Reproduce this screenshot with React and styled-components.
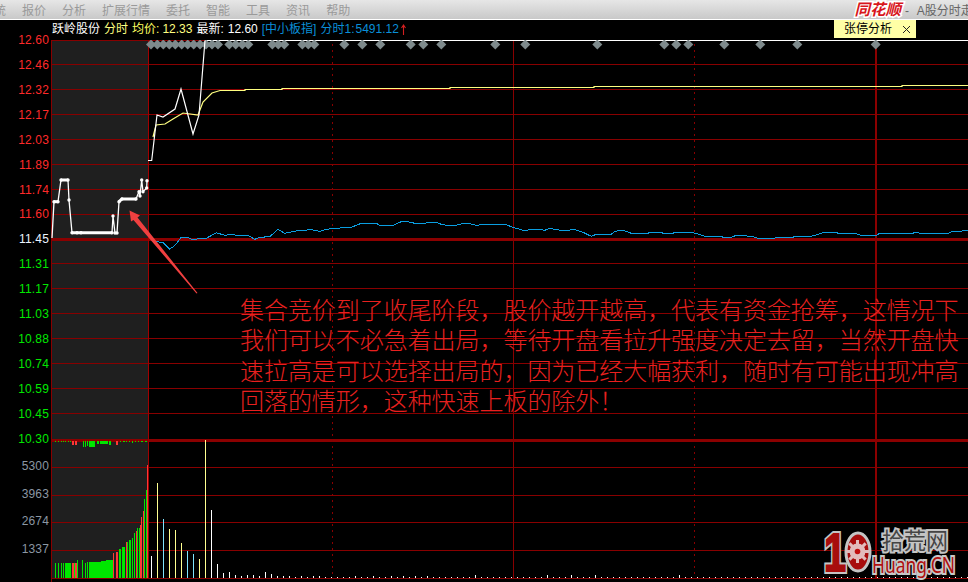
import React from 'react';
import styled, { createGlobalStyle } from 'styled-components';

const Global = createGlobalStyle`
  html, body { margin: 0; padding: 0; background: #000; }
`;

const Screen = styled.div`
  width: 968px; height: 582px; overflow: hidden; background: #000;
  display: flex; flex-direction: column;
  font-family: "Liberation Sans", "Noto Sans CJK SC", sans-serif; font-size: 12px;
`;
const MenuBar = styled.div`
  height: 19px; flex: none; border-bottom: 1px solid #fff;
  background: linear-gradient(#e6e6e6, #c9c9c9);
  display: flex; align-items: center; gap: 16px; color: #9a9a9a; white-space: nowrap;
`;
const MenuItem = styled.span`
  flex: none;
  &:first-child { margin-left: -6px; }
`;
const Brand = styled.span`
  margin-left: auto; flex: none; color: #d8161c; font-size: 15.5px; font-weight: 700; font-style: italic;
  line-height: 16px; -webkit-text-stroke: 3px #fff; paint-order: stroke fill;
`;
const WindowTitle = styled.span`
  flex: none; width: 63px; margin-left: -12px; overflow: hidden; color: #666; word-spacing: 5px;
`;
const Workspace = styled.div`
  flex: 1; min-height: 0; display: grid; grid-template-columns: 51px 1fr; grid-template-rows: 20px 1fr;
`;
const Axis = styled.div`
  grid-row: 1 / 3; padding-top: 7.8px; display: flex; flex-direction: column; min-width: 0;
`;
const AxisGroup = styled.div`
  display: flex; flex-direction: column; margin-top: ${p => p.$mt || 0}px;
`;
const AxisLabel = styled.div`
  height: ${p => p.$h}px; line-height: ${p => p.$h}px; text-align: right; padding-right: 2px;
  color: ${p => p.$c}; letter-spacing: .15px;
`;
const Header = styled.div`
  display: flex; align-items: flex-start; white-space: nowrap; padding-left: 1px; line-height: 18px;
`;
const HeaderItem = styled.span`
  color: ${p => p.$c}; margin-left: ${p => p.$ml || 0}px; flex: none;
`;
const UpArrow = styled.svg`
  width: 5px; height: 12px; flex: none; margin: 4px 0 0 2px;
`;
const Tab = styled.div`
  margin-left: auto; margin-right: 52px; width: 82px; height: 18px; box-sizing: border-box;
  background: #ffffa6; color: #000; display: flex; align-items: center; gap: 10px; padding-left: 10px;
`;
const Close = styled.svg`
  width: 9px; height: 9px; flex: none;
`;
const ChartPane = styled.div`
  position: relative; min-width: 0; min-height: 0;
`;
const Chart = styled.svg`
  display: block; width: 917px; height: 542px;
`;
const Note = styled.div`
  position: absolute; left: 189px; top: 254px; width: 722px;
  color: #e8201f; font-family: "Noto Sans CJK SC", sans-serif; font-weight: 300; font-size: 24px;
  line-height: 30.4px; letter-spacing: -.05px;
`;
const LogoCn = styled.text`
  font-family: "Noto Sans CJK SC", sans-serif; font-size: 23px; fill: #454545;
  stroke: #c4c4c4; stroke-width: 4px; paint-order: stroke fill;
`;
const LogoEn = styled.text`
  font-family: "Noto Sans", sans-serif; font-size: 22px; fill: #b01010;
  stroke: #c8c8c8; stroke-width: 4px; paint-order: stroke fill;
`;
const LogoOne = styled.text`
  font-family: "Liberation Sans", sans-serif; font-size: 54px; font-weight: 700; fill: #a80d0d;
  stroke: ${p => p.$stroke}; stroke-width: ${p => p.$sw}px;
`;

const menu = ['统', '报价', '分析', '扩展行情', '委托', '智能', '工具', '资讯', '帮助'];
const RED = '#ff2a2a', GREEN = '#00e800', GREY = '#8b97a3';
const prices = [
  ['12.60', RED], ['12.46', RED], ['12.32', RED], ['12.17', RED], ['12.03', RED], ['11.89', RED], ['11.74', RED], ['11.60', RED],
  ['11.45', '#eaf4ff'], ['11.31', GREEN], ['11.17', GREEN], ['11.03', GREEN], ['10.88', GREEN], ['10.74', GREEN], ['10.59', GREEN], ['10.45', GREEN], ['10.30', GREEN],
];
const volumes = ['5300', '3963', '2674', '1337'];
const headerItems = [
  ['跃岭股份', '#fff', 0], ['分时', '#ffff80', 4], ['均价:', '#ffff60', 4], ['12.33', '#ffff80', 3], ['最新:', '#fff', 4],
  ['12.60', '#fff', 4], ['[中小板指]', '#0a8fd8', 4], ['分时1:', '#0a8fd8', 4], ['5491.12', '#0a8fd8', 1],
];

const hLines = [64, 89, 114, 139, 164, 189, 214, 263, 288, 313, 338, 363, 388, 413, 467, 495, 522, 550, 578];
const diamonds = [151, 157.3, 163.3, 169.3, 175.3, 181.7, 187.7, 193.7, 200, 206, 212, 218, 229.3, 235.7, 242.3, 248.3, 272.3, 278.3, 284.3, 302.3, 308.3, 314.3, 344.3, 362.3, 380.3, 410.7, 423.3, 441.3, 495.3, 525.3, 597.3, 664.3, 676.3, 688.3, 724.3, 760.3, 797.3, 875.7];

const toPts = (arr) => arr.map(([x, y]) => `${x},${y}`).join(' ');
const z = (arr, ox, oy) => arr.map(([x, y]) => [+(ox + x / 3).toFixed(1), +(oy + y / 3).toFixed(1)]);

const pre = [[52, 238], [54, 201.7], [58, 201.7], [61, 180], [68, 180], [69, 200], [72, 232.7], [77, 232.7], [81, 232.7], [112, 232.7], [113, 216], [115, 233], [117, 233], [119, 201.7], [122, 199], [136, 199], [139, 191.7], [140, 196], [141.7, 180], [143, 191.7], [146.7, 188], [147, 180.7]];
const preThick = [[[54, 201.7], [58, 201.7]], [[61, 180], [68, 180]], [[72, 232.7], [112, 232.7]], [[119, 201.7], [122, 199], [136, 199]]];
const price = [[148, 160.5], [151.7, 160.5], [157, 115], [163, 117], [175, 109], [181, 89], [193, 134], [199, 115], [205, 40.5]];
const avg = [[153, 137], [156, 125], [165, 124], [173, 119], [183, 113], [198, 115], [203, 102], [212, 93], [220, 90.5], [245, 90.5], [245, 89.5], [282, 89.5], [282, 88.5], [450, 88.5], [450, 87.5], [594, 87.5], [594, 86.5], [902, 86.5], [902, 85.5], [968, 85.5]];
const blueA = z([[20, 95], [45, 97], [65, 117], [80, 107], [100, 82], [120, 82], [135, 90], [150, 86], [175, 85], [205, 68], [230, 76], [250, 73], [275, 78], [300, 76], [320, 88], [335, 82], [365, 80], [390, 58], [410, 70], [450, 62], [490, 59], [515, 64], [535, 58], [575, 54], [610, 52], [640, 40], [685, 40], [695, 46], [735, 46], [760, 35], [780, 35], [800, 40], [830, 40], [840, 37], [865, 37], [880, 43], [895, 46], [925, 46], [945, 40], [960, 40], [985, 46], [1015, 43], [1070, 43], [1095, 52], [1125, 61], [1175, 58], [1190, 61], [1205, 55], [1230, 60]], 148, 210);
const blueB = z([[0, 58], [5, 61], [35, 61], [40, 58], [50, 58], [60, 62], [75, 67], [100, 79], [115, 73], [160, 73], [170, 64], [195, 61], [220, 70], [270, 70], [275, 67], [310, 67], [315, 70], [345, 70], [350, 67], [400, 67], [420, 72], [440, 79], [490, 79], [495, 82], [520, 82], [535, 76], [580, 79], [600, 85], [650, 85], [655, 82], [705, 82], [710, 79], [760, 79], [800, 67], [835, 67], [840, 70], [890, 70], [910, 76], [955, 76], [965, 70], [1065, 70], [1070, 67], [1090, 70], [1170, 70], [1185, 64], [1210, 64], [1215, 61], [1230, 61]], 558, 210);

const R = '#ff3636', G = '#00e600', Y = '#ffff90', B = '#80e4ff', W = '#fff';
const preBars = [
  [165, 168, 400, G], [174, 177, 400, G], [183, 186, 400, G], [190, 193, 400, G], [196, 214, 400, G], [216, 222, 398, R], [223, 225, 398, G], [226, 232, 398, R], [232, 235, 390, G],
  [247, 250, 390, G], [254, 257, 398, G], [260, 263, 396, G], [266, 296, 396, G], [296, 303, 395, G], [303, 318, 393, G], [318, 338, 390, G],
  [339, 342, 368, R], [348, 354, 366, R], [357, 363, 357, G], [366, 375, 351, G], [378, 381, 335, R], [381, 384, 335, G], [387, 393, 330, G], [396, 399, 323, G], [402, 405, 308, G], [408, 411, 303, R], [411, 414, 294, G], [417, 420, 294, G], [420, 423, 285, R], [423, 426, 262, R], [429, 432, 243, R], [432, 435, 207, G], [438, 441, 180, G], [441, 444, 105, R],
].map(([a, b, top, c]) => ({ x: Math.round(a / 3), w: Math.max(1, Math.round((b - a) / 3)), y: Math.round(430 + top / 3), c }));
const postBars = [[151, 556, W], [157, 483, Y], [163, 519, B], [169, 529, Y], [175, 530, Y], [181, 543, Y], [187, 551, B], [193, 554, B], [199, 559, Y], [205, 440, Y], [211, 510, W], [217, 564, W], [223, 573, W], [229, 572, W]];
const smallTall = { 235: 3, 241: 2, 247: 3, 253: 3, 259: 2, 265: 6, 271: 4, 277: 2, 283: 2, 289: 2, 301: 2, 313: 2, 319: 2, 355: 2, 373: 2, 391: 2, 403: 2, 415: 2, 427: 2, 459: 6, 475: 3, 547: 3, 571: 3, 595: 3, 628: 3, 679: 3 };
const tinyBars = [];
for (let x = 235; x < 968; x += 6) tinyBars.push([x, 578 - (smallTall[x] || 1)]);
const flow = [
  [55, 1, 1], [58, 1, 1], [61, 1, 1], [63, 1, 1], [65, 1, 1], [68, 1, 1], [70, 1, 1], [72, 2, 4, R], [75, 2, 4, R],
  [83, 1, 6], [85, 1, 6], [87, 1, 5], [89, 6, 6], [97, 2, 3], [100, 8, 3], [109, 2, 4], [116, 2, 4, R],
  [120, 1, 1], [123, 2, 1], [126, 1, 1], [129, 1, 1], [132, 1, 2], [135, 1, 1], [138, 1, 1], [141, 2, 1], [145, 2, 1],
];

const gearTeeth = Array.from({ length: 8 }, (_, i) => i * 45);

export default function App() {
  return (
    <Screen>
      <Global />
      <MenuBar>
        {menu.map(m => <MenuItem key={m}>{m}</MenuItem>)}
        <Brand>同花顺</Brand>
        <WindowTitle>- A股分时走势图</WindowTitle>
      </MenuBar>
      <Workspace>
        <Axis>
          <AxisGroup>
            {prices.map(([t, c]) => <AxisLabel key={t} $h={24.96} $c={c}>{t}</AxisLabel>)}
          </AxisGroup>
          <AxisGroup $mt={1}>
            {volumes.map(t => <AxisLabel key={t} $h={27.7} $c={GREY}>{t}</AxisLabel>)}
          </AxisGroup>
        </Axis>
        <Header>
          {headerItems.map(([t, c, ml]) => <HeaderItem key={t + ml} $c={c} $ml={ml}>{t}</HeaderItem>)}
          <UpArrow viewBox="0 0 5 12"><path d="M2.5 1 V11 M0.5 4 L2.5 1 L4.5 4" stroke="#d42020" strokeWidth="1.1" fill="none" /></UpArrow>
          <Tab>
            张停分析
            <Close viewBox="0 0 9 9"><path d="M1 1 L8 8 M8 1 L1 8" stroke="#222" strokeWidth="1" fill="none" /></Close>
          </Tab>
        </Header>
        <ChartPane>
          <Chart viewBox="51 40 917 542">
            <rect x="52" y="41" width="96" height="537" fill="#1f1f1f" />
            <g shapeRendering="crispEdges" fill="none" stroke="#880000">
              {hLines.map(y => <path key={y} d={`M51 ${y + 0.5} H968`} />)}
              <rect x="51" y="238" width="917" height="3" fill="#8b0000" stroke="none" />
              <rect x="51" y="439" width="917" height="3" fill="#8b0000" stroke="none" />
              <path d="M51.5 41 V582" />
              <path d="M148.5 41 V578" stroke="#a00000" />
              <path d="M513.5 41 V578" />
              <rect x="875" y="48" width="2" height="530" fill="#8b0000" stroke="none" />
              <path d="M332.5 44 V578 M694.5 44 V578" strokeDasharray="2 4" />
              <path d="M51 40.5 H205" />
              <path d="M205 40.5 H968" stroke="#fff" />
            </g>
            <g fill="#7e8a8c">
              {diamonds.map(x => <path key={x} d={`M${x} 39.5 l5 5 l-5 5 l-5 -5 z`} />)}
            </g>
            <polyline points={toPts(blueA)} fill="none" stroke="#0a9ee0" strokeWidth="1" shapeRendering="crispEdges" />
            <polyline points={toPts(blueB)} fill="none" stroke="#0a9ee0" strokeWidth="1" shapeRendering="crispEdges" />
            <polyline points={toPts(avg)} fill="none" stroke="#ffff80" strokeWidth="1.2" />
            <polyline points={toPts(price)} fill="none" stroke="#fff" strokeWidth="1.2" />
            <polyline points={toPts(pre)} fill="none" stroke="#fff" strokeWidth="1.3" />
            {preThick.map((s, i) => <polyline key={i} points={toPts(s)} fill="none" stroke="#fff" strokeWidth="3" />)}
            {pre.slice(1).map(([x, y]) => <circle key={`${x}-${y}`} cx={x} cy={y} r="1.7" fill="#fff" />)}

            <g shapeRendering="crispEdges">
              {flow.map(([x, w, h, c], i) => <rect key={i} x={x} y="441" width={w} height={h} fill={c || G} />)}
              {preBars.map(({ x, w, y, c }) => <rect key={x} x={x} y={y} width={w} height={578 - y} fill={c} />)}
              {postBars.map(([x, y, c]) => <rect key={x} x={x} y={y} width="1" height={578 - y} fill={c} />)}
              {tinyBars.map(([x, y]) => <rect key={x} x={x} y={y} width="1" height={578 - y} fill="#fff" />)}
            </g>

            <polygon points="129.5,210.5 140,215.5 137.5,217.5 197.5,293 196.5,293.5 133.5,220 131,221.5" fill="#f04040" />

            <g>
              <LogoOne x="824" y="571" textLength="22" lengthAdjust="spacingAndGlyphs" $stroke="#c4c4c4" $sw={6}>1</LogoOne>
              <LogoOne x="824" y="571" textLength="22" lengthAdjust="spacingAndGlyphs" $stroke="#a80d0d" $sw={2}>1</LogoOne>
              <ellipse cx="858" cy="552" rx="12" ry="19" fill="#a80d0d" stroke="#c4c4c4" strokeWidth="3" />
              <g transform="translate(857.5 551.5)">
                {gearTeeth.map(a => <rect key={a} x="-1.5" y="-11.5" width="3" height="5" fill="#e2bcbc" transform={`rotate(${a})`} />)}
                <circle r="8" fill="#e2bcbc" />
                <circle r="2.8" fill="#c01010" />
              </g>
              <LogoCn x="882" y="549" textLength="66" lengthAdjust="spacingAndGlyphs">拾荒网</LogoCn>
              <LogoEn x="872" y="573" textLength="83" lengthAdjust="spacingAndGlyphs">Huang.CN</LogoEn>
            </g>
          </Chart>
          <Note>集合竞价到了收尾阶段，股价越开越高，代表有资金抢筹，这情况下我们可以不必急着出局，等待开盘看拉升强度决定去留，当然开盘快速拉高是可以选择出局的，因为已经大幅获利，随时有可能出现冲高回落的情形，这种快速上板的除外！</Note>
        </ChartPane>
      </Workspace>
    </Screen>
  );
}
